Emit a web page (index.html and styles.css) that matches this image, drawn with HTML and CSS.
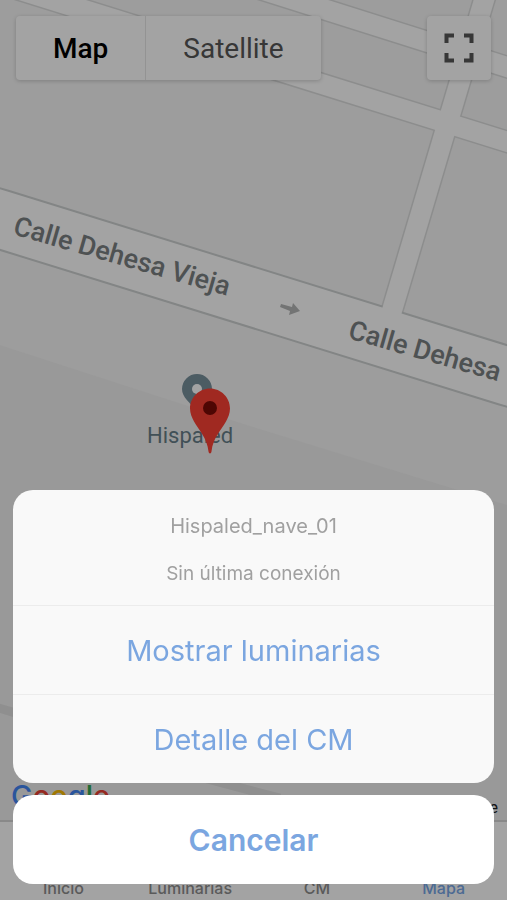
FILE: index.html
```html
<!DOCTYPE html>
<html lang="es">

<head>
    <meta charset="UTF-8">
    <meta name="viewport" content="width=device-width, initial-scale=1.0">
    <title>Mapa</title>
    <link rel="stylesheet" href="styles.css">
</head>

<body>
    <main class="map">
        <svg class="map-canvas" viewBox="0 0 507 820" preserveAspectRatio="xMidYMin slice">
            <path class="land" d="M0 345 L250 426 L507 505 V820 H0 Z" />
            <path class="track" d="M-10 706 Q20 712 60 732 T280 798" />

            <!-- street borders -->
            <g class="street-border">
                <path d="M200 -30 L507 67 L540 77" />
                <path d="M-44 -30 L540 152" />
                <path d="M388 324 L490 -20" />
                <path class="wide" d="M-40 207 L0 219 L507 376 L540 386" />
            </g>
            <g class="street">
                <path d="M200 -30 L507 67 L540 77" />
                <path d="M-44 -30 L540 152" />
                <path d="M388 324 L490 -20" />
                <path class="wide" d="M-40 207 L0 219 L507 376 L540 386" />
            </g>

            <path class="arrow" d="M281 304 L292 307 L293 303 L300 311 L289 315 L290 311 L280 307 Z" />

            <text class="street-name" transform="translate(12 234) rotate(16)">Calle Dehesa Vieja</text>
            <text class="street-name" transform="translate(347 338) rotate(16)">Calle Dehesa</text>

            <path class="poi" d="M197 374 a15 15 0 0 1 15 15 c0 9 -8 12 -15 24 c-7 -12 -15 -15 -15 -24 a15 15 0 0 1 15 -15 Z" />
            <circle class="poi-hole" cx="197" cy="389" r="5" />
            <text class="poi-name" x="147" y="443">Hispaled</text>

            <path class="pin" d="M210 388.500 c-11 0 -20 9 -20 20 c0 5 2 9 4 13 c5 9 13 16 14.500 30 c.3 2.500 2.700 2.500 3 0 c1.500 -14 9.500 -21 14.500 -30 c2 -4 4 -8 4 -13 c0 -11 -9 -20 -20 -20 Z" />
            <circle class="pin-dot" cx="210" cy="408" r="7" />
        </svg>

        <div class="map-controls">
            <div class="map-type">
                <button type="button" class="active">Map</button>
                <button type="button">Satellite</button>
            </div>
            <button type="button" class="fullscreen" aria-label="Fullscreen">
                <svg width="30" height="30" viewBox="0 0 30 30">
                    <path d="M2.500 10 V2.500 H10 M20 2.500 H27.500 V10 M27.500 20 V27.500 H20 M10 27.500 H2.500 V20" />
                </svg>
            </button>
        </div>

        <div class="map-footer">
            <div class="google"><span class="b">G</span><span class="r">o</span><span class="y">o</span><span class="b">g</span><span class="g">l</span><span class="r">e</span></div>
            <a class="terms" href="#">Terms of Use</a>
        </div>
    </main>

    <nav class="tabs">
        <a href="#">Inicio</a>
        <a href="#">Luminarias</a>
        <a href="#">CM</a>
        <a href="#" class="active">Mapa</a>
    </nav>

    <div class="backdrop">
        <div class="action-sheet" role="dialog" aria-labelledby="sheet-title">
            <div class="sheet-group">
                <div class="sheet-header">
                    <div class="sheet-title" id="sheet-title">Hispaled_nave_01</div>
                    <div>Sin última conexión</div>
                </div>
                <button type="button">Mostrar luminarias</button>
                <button type="button">Detalle del CM</button>
            </div>
            <button type="button" class="cancel">Cancelar</button>
        </div>
    </div>
</body>

</html>
```
FILE: styles.css
```css
* {
    box-sizing: border-box;
}

body {
    margin: 0;
    min-height: 100vh;
    display: flex;
    flex-direction: column;
    font-family: Inter, "Liberation Sans", sans-serif;
    background-color: #fff;
}

button {
    border: none;
    padding: 0;
    background: none;
    font-family: inherit;
    cursor: pointer;
}

/* map */
.map {
    position: relative;
    flex: 1;
    display: flex;
    flex-direction: column;
    justify-content: space-between;
    background-color: #f6f6f6;
    font-family: Roboto, sans-serif;
    overflow: hidden;
}

.map-canvas {
    position: absolute;
    top: 0;
    left: 0;
    width: 100%;
    height: 100%;
}

.land {
    fill: #f0f0f0;
}

.track {
    fill: none;
    stroke: #e0e0e0;
    stroke-width: 9px;
}

.street-border path {
    fill: none;
    stroke: #dcdddd;
    stroke-width: 23px;
}

.street path {
    fill: none;
    stroke: #ffffff;
    stroke-width: 20px;
}

.street-border .wide {
    stroke: #cdd1d1;
    stroke-width: 61px;
}

.street .wide {
    stroke-width: 57px;
}

.arrow {
    fill: #b4b6b6;
}

.street-name {
    font-size: 27px;
    font-weight: 500;
    fill: #7b8082;
}

.poi {
    fill: #78909c;
}

.poi-hole {
    fill: #fff;
}

.poi-name {
    font-size: 22px;
    fill: #667d88;
}

.pin {
    fill: #fb4135;
}

.pin-dot {
    fill: #7a0a06;
}

.map-controls {
    position: relative;
    display: flex;
    justify-content: space-between;
    padding: 16px;
}

.map-type {
    display: flex;
    border-radius: 4px;
    background-color: #fff;
    box-shadow: 0 1px 4px rgba(0, 0, 0, 0.2);
}

.map-type button {
    height: 64px;
    padding: 0 37px;
    font-size: 28px;
    color: #565656;
}

.map-type button + button {
    border-left: 1px solid #e6e6e6;
}

.map-type .active {
    font-weight: 500;
    color: #000;
}

.fullscreen {
    display: flex;
    align-items: center;
    justify-content: center;
    width: 64px;
    height: 64px;
    border-radius: 4px;
    background-color: #fff;
    box-shadow: 0 1px 4px rgba(0, 0, 0, 0.2);
}

.fullscreen path {
    fill: none;
    stroke: #565656;
    stroke-width: 4px;
}

.map-footer {
    position: relative;
    display: flex;
    justify-content: space-between;
    align-items: flex-end;
    padding: 0 9px 2px 11px;
}

.google {
    font-family: Inter, sans-serif;
    font-size: 29px;
    font-weight: 500;
    line-height: 44px;
}

.google .b { color: #4285f4; }
.google .r { color: #ea4335; }
.google .y { color: #fbbc05; }
.google .g { color: #34a853; }

.terms {
    font-size: 16px;
    line-height: 20px;
    color: #222;
    text-decoration: none;
}

/* bottom tabs */
.tabs {
    display: flex;
    height: 80px;
    border-top: 2px solid #d6d6d6;
    background-color: #fff;
}

.tabs a {
    flex: 1;
    display: flex;
    align-items: flex-end;
    justify-content: center;
    padding-bottom: 2px;
    font-size: 16px;
    font-weight: 500;
    line-height: 20px;
    color: #8e8e8e;
    text-decoration: none;
}

.tabs .active {
    color: #77a6e6;
}

/* action sheet */
.backdrop {
    position: fixed;
    inset: 0;
    display: flex;
    flex-direction: column;
    justify-content: flex-end;
    padding: 16px 13px;
    background-color: rgba(0, 0, 0, 0.36);
}

.action-sheet {
    display: flex;
    flex-direction: column;
    gap: 12px;
}

.sheet-group {
    display: flex;
    flex-direction: column;
    border-radius: 20px;
    background-color: #f9f9f9;
    overflow: hidden;
}

.sheet-header {
    display: flex;
    flex-direction: column;
    gap: 24px;
    padding: 24px 16px 19px;
    font-size: 19px;
    line-height: 24px;
    text-align: center;
    color: #a0a0a0;
}

.sheet-title {
    font-size: 20px;
}

.action-sheet button {
    height: 89px;
    font-size: 29px;
    color: #7ba6e0;
}

.sheet-group button {
    border-top: 1px solid #ececec;
}

.action-sheet .cancel {
    border-radius: 20px;
    background-color: #fff;
    font-size: 30px;
    font-weight: 600;
}
```
